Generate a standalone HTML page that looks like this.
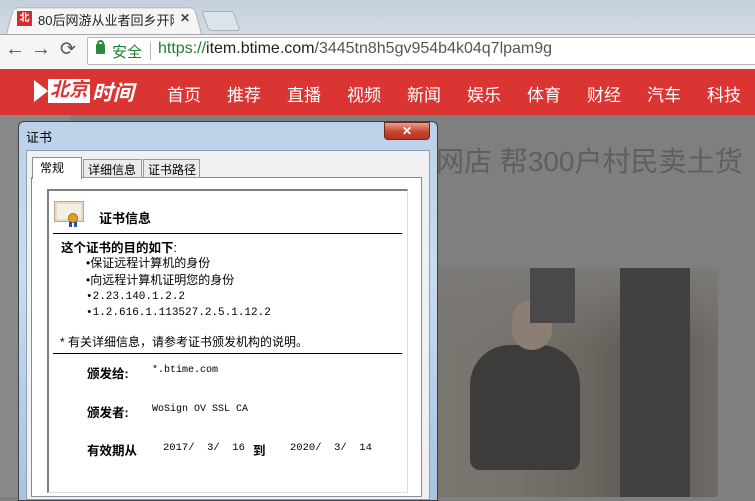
<!DOCTYPE html>
<html><head><meta charset="utf-8"><style>
*{margin:0;padding:0;box-sizing:border-box}
body{width:755px;height:497px;overflow:hidden;position:relative;background:#7f7f7f;font-family:"Liberation Sans","Noto Sans CJK SC",sans-serif}
.abs{position:absolute}
.mono{font-family:"Liberation Mono","Noto Sans CJK SC",monospace}
.ln{position:absolute;left:0;white-space:nowrap;line-height:14px}
</style></head><body>
<!-- tab strip -->
<div class="abs" style="left:0;top:0;width:755px;height:34px;background:linear-gradient(#c4cfdc,#d3dce6)"></div>
<div class="abs" style="left:6px;top:5px;width:196px;height:29px;background:#f5f5f5;border:1px solid #a8b0b8;border-bottom:none;border-radius:5px 5px 0 0;transform:perspective(50px) rotateX(8deg);transform-origin:bottom"></div>
<div class="abs" style="left:17px;top:11px;width:15px;height:15px;background:#d42b2b;color:#fff;font-size:10px;line-height:15px;text-align:center;font-weight:bold">北</div>
<div class="abs" style="left:38px;top:10px;width:136px;overflow:hidden;font-size:13px;color:#222;white-space:nowrap">80后网游从业者回乡开网</div>
<div class="abs" style="left:180px;top:11px;font-size:12px;color:#444;font-weight:bold">✕</div>
<div class="abs" style="left:205px;top:11px;width:32px;height:20px;background:#dde3ea;border:1px solid #a8b0b8;border-radius:3px;transform:skewX(20deg)"></div>
<!-- toolbar -->
<div class="abs" style="left:0;top:34px;width:755px;height:35px;background:#f5f5f5;border-top:1px solid #a8a8a8"></div>
<div class="abs" style="left:5px;top:38px;font-size:20px;color:#555">←</div>
<div class="abs" style="left:31px;top:38px;font-size:20px;color:#555">→</div>
<div class="abs" style="left:60px;top:38px;font-size:19px;color:#555">⟳</div>
<div class="abs" style="left:87px;top:37px;width:670px;height:28px;background:#fff;border:1px solid #b8b8b8;border-radius:2px"></div>
<div class="abs" style="left:96px;top:44px;width:9px;height:10px;background:#2a8a3a;border-radius:1px"></div>
<div class="abs" style="left:97px;top:40px;width:7px;height:7px;border:2px solid #2a8a3a;border-bottom:none;border-radius:4px 4px 0 0"></div>
<div class="abs" style="left:112px;top:41px;font-size:15px;color:#1e7e34">安全</div>
<div class="abs" style="left:150px;top:42px;width:1px;height:18px;background:#bbb"></div>
<div class="abs" style="left:158px;top:40px;font-size:16px;color:#555;white-space:nowrap"><span style="color:#1e7e34">https://</span><span style="color:#222">item.btime.com</span>/3445tn8h5gv954b4k04q7lpam9g</div>
<!-- red nav -->
<div class="abs" style="left:0;top:69px;width:755px;height:46px;background:#da3433"></div>
<div class="abs" style="left:34px;top:80px;width:0;height:0;border-left:14px solid #fff;border-top:11px solid transparent;border-bottom:11px solid transparent"></div>
<div class="abs" style="left:48px;top:79px;width:42px;height:24px;background:#fff;color:#da3433;font-size:19px;font-weight:bold;line-height:24px;text-align:center;font-style:italic">北京</div>
<div class="abs" style="left:92px;top:77px;color:#fff;font-size:21px;font-weight:bold;font-style:italic">时间</div>
<div class="abs" style="left:167px;top:81px;color:#fff;font-size:17px;white-space:nowrap">
<span style="position:absolute;left:0">首页</span><span style="position:absolute;left:60px">推荐</span><span style="position:absolute;left:120px">直播</span><span style="position:absolute;left:180px">视频</span><span style="position:absolute;left:240px">新闻</span><span style="position:absolute;left:300px">娱乐</span><span style="position:absolute;left:360px">体育</span><span style="position:absolute;left:420px">财经</span><span style="position:absolute;left:480px">汽车</span><span style="position:absolute;left:540px">科技</span></div>
<div class="abs" style="left:0;top:115px;width:755px;height:382px;background:#7f7f7f"></div>
<div class="abs" style="left:0;top:115px;width:70px;height:382px;background:#888"></div>
<!-- page title behind -->
<div class="abs" style="left:408px;top:140px;font-size:28px;color:#5f5f5f;white-space:nowrap">卖网店 帮300户村民卖土货</div>
<!-- photo -->
<div class="abs" style="left:437px;top:268px;width:281px;height:229px;background:linear-gradient(90deg,#7a7670 0%,#75716b 30%,#6a665f 55%,#5a5753 75%,#6f6b66 100%)"></div>
<div class="abs" style="left:437px;top:268px;width:281px;height:80px;background:linear-gradient(#7c7a78,transparent)"></div>
<div class="abs" style="left:470px;top:345px;width:110px;height:125px;background:#3e3c3a;border-radius:40px 40px 10px 10px"></div>
<div class="abs" style="left:512px;top:300px;width:40px;height:50px;background:#8a7f72;border-radius:20px"></div>
<div class="abs" style="left:620px;top:268px;width:70px;height:229px;background:#43413f"></div>
<div class="abs" style="left:530px;top:268px;width:45px;height:55px;background:#4a484a"></div>
<!-- dialog -->
<div class="abs" style="left:18px;top:121px;width:420px;height:380px;background:linear-gradient(#bcd0e8,#c9dbef 40%,#a9c3e2);border:1px solid #3a3f48;border-radius:6px 6px 0 0"></div>
<div class="abs" style="left:26px;top:127px;font-size:13px;color:#000">证书</div>
<div class="abs" style="left:384px;top:122px;width:46px;height:18px;background:linear-gradient(#e8a090,#c8452f 55%,#b8331f);border:1px solid #6a2a20;border-radius:0 0 4px 4px;color:#fff;font-size:12px;font-weight:bold;text-align:center;line-height:16px">✕</div>
<div class="abs" style="left:26px;top:150px;width:404px;height:350px;background:#f0f0f0;border:1px solid #8ba0b8"></div>
<div class="abs" style="left:31px;top:177px;width:391px;height:320px;background:#fff;border:1px solid #898c95"></div>
<div class="abs" style="left:32px;top:157px;width:50px;height:22px;background:#fff;border:1px solid #898c95;border-bottom:none"></div>
<div class="abs" style="left:40px;top:159px;font-size:12px">常规</div>
<div class="abs" style="left:83px;top:159px;width:59px;height:19px;background:#ebebeb;border:1px solid #999"></div>
<div class="abs" style="left:88px;top:161px;font-size:12px">详细信息</div>
<div class="abs" style="left:143px;top:159px;width:57px;height:19px;background:#ebebeb;border:1px solid #999"></div>
<div class="abs" style="left:148px;top:161px;font-size:12px">证书路径</div>
<div class="abs" style="left:47px;top:189px;width:361px;height:304px;background:#fff;border-left:2px solid #808080;border-top:2px solid #808080;border-right:1px solid #ddd;border-bottom:1px solid #ddd"></div>
<!-- cert icon -->
<div class="abs" style="left:54px;top:201px;width:30px;height:21px;background:#f4efe0;border:1px solid #b8a888;box-shadow:inset 0 0 0 2px #e6dcc4"></div>
<div class="abs" style="left:68px;top:213px;width:10px;height:10px;background:#e0a020;border-radius:50%;border:1px solid #a07010"></div>
<div class="abs" style="left:69px;top:222px;width:3px;height:5px;background:#2050b0"></div>
<div class="abs" style="left:74px;top:222px;width:3px;height:5px;background:#2050b0"></div>
<div class="abs" style="left:99px;top:208px;font-size:13px;font-weight:bold">证书信息</div>
<div class="abs" style="left:53px;top:233px;width:349px;height:1px;background:#000"></div>
<div class="abs" style="left:61px;top:237px;font-size:12.5px;font-weight:bold">这个证书的目的如下<span style="font-weight:normal">:</span></div>
<div class="abs" style="left:86px;top:256px;width:300px;height:70px;font-size:12px">
<div class="ln" style="top:0">•保证远程计算机的身份</div><div class="ln" style="top:17px">•向远程计算机证明您的身份</div><div class="ln mono" style="top:34px;font-size:11px">•2.23.140.1.2.2</div><div class="ln mono" style="top:50px;font-size:11px">•1.2.616.1.113527.2.5.1.12.2</div></div>
<div class="abs" style="left:60px;top:333px;font-size:12px">* 有关详细信息，请参考证书颁发机构的说明。</div>
<div class="abs" style="left:53px;top:353px;width:349px;height:1px;background:#000"></div>
<div class="abs" style="left:87px;top:363px;font-size:12.5px;font-weight:bold">颁发给:</div>
<div class="abs mono" style="left:152px;top:365px;font-size:10px">*.btime.com</div>
<div class="abs" style="left:87px;top:402px;font-size:12.5px;font-weight:bold">颁发者:</div>
<div class="abs mono" style="left:152px;top:404px;font-size:10px">WoSign OV SSL CA</div>
<div class="abs" style="left:87px;top:440px;font-size:12.5px;font-weight:bold">有效期从</div>
<div class="abs mono" style="left:163px;top:442px;font-size:10.5px;white-space:pre">2017/  3/  16</div>
<div class="abs" style="left:253px;top:440px;font-size:12.5px;font-weight:bold">到</div>
<div class="abs mono" style="left:290px;top:442px;font-size:10.5px;white-space:pre">2020/  3/  14</div>
</body></html>
